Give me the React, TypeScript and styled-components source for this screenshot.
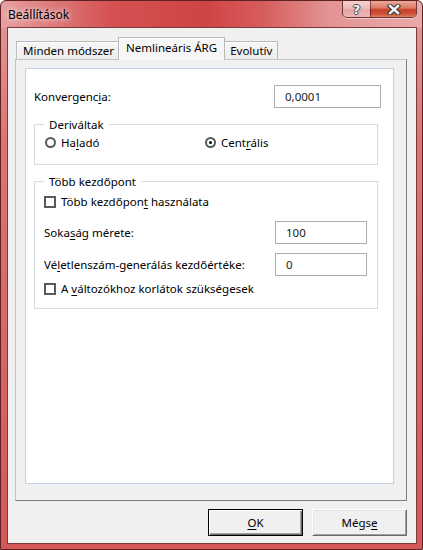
// react
import React from 'react'

// packages
import styled, { createGlobalStyle, css } from 'styled-components'

// constants
const FONT = `"Noto Sans", "Open Sans", sans-serif`
const FONT_SIZE = '11.5px'
const TEXT = '#000'

// global
const GlobalStyle = createGlobalStyle`
  html, body {
    margin: 0;
    padding: 0;
  }
  body {
    background: #fff;
    color: ${TEXT};
    font-family: ${FONT};
    font-size: ${FONT_SIZE};
  }
  * {
    box-sizing: border-box;
  }
`

// window frame
const Frame = styled.div`
  background:
    linear-gradient(90deg, #e8a0a0 0%, #df8080 10%, #d45252 26%, #cf4444 48%, #d65c5c 62%, #e39494 78%, #eaa9a9 100%) 0 0 / 100% 27px no-repeat,
    linear-gradient(180deg, #e49a9a 0, #dc7474 140px, #d45858 100%);
  border: 1px solid #5e2222;
  border-radius: 6px 6px 0 0;
  display: flex;
  flex-direction: column;
  height: 550px;
  padding: 0 5px 5px 6px;
  width: 423px;
`

const TitleBar = styled.div`
  align-items: flex-start;
  display: flex;
  height: 26px;
  justify-content: space-between;
`

const Title = styled.span`
  font-size: 12px;
  line-height: 15px;
  margin: 6px 0 0 1px;
  text-shadow: 0 0 5px rgba(255, 255, 255, 0.9), 0 0 10px rgba(255, 255, 255, 0.6);
`

const CaptionGroup = styled.div`
  border: 1px solid rgba(70, 20, 20, 0.75);
  border-radius: 0 0 5px 5px;
  border-top: none;
  box-shadow: 0 1px 0 rgba(255, 255, 255, 0.45);
  display: flex;
  height: 17px;
  overflow: hidden;
`

const CaptionButton = styled.div<{ $close?: boolean }>`
  align-items: center;
  display: flex;
  justify-content: center;
  width: ${({ $close }) => ($close ? 46 : 27)}px;

  ${({ $close }) =>
    $close
      ? css`
          background: linear-gradient(180deg, #eba89a 0%, #dd7c68 42%, #c7412a 55%, #d0533a 82%, #e2825f 100%);
          border-left: 1px solid rgba(70, 20, 20, 0.6);
        `
      : css`
          background: linear-gradient(180deg, rgba(255, 255, 255, 0.55) 0%, rgba(255, 255, 255, 0.32) 45%, rgba(255, 255, 255, 0.12) 55%, rgba(255, 255, 255, 0.28) 100%);
        `}
`

const HelpGlyph = styled.span`
  color: #f4f4f4;
  font-family: "DejaVu Sans", sans-serif;
  font-size: 13px;
  font-weight: bold;
  line-height: 15px;
  text-shadow: 1px 0 #4a4a4a, -1px 0 #4a4a4a, 0 1px #4a4a4a, 0 -1px #4a4a4a;
`

// client area
const Client = styled.div`
  background: #f0f0f0;
  border: 1px solid #7b3a3a;
  display: flex;
  flex: 1;
  flex-direction: column;
  padding: 9px 9px 7px 7px;
`

const TabStrip = styled.div`
  align-items: flex-end;
  display: flex;
  margin-bottom: -1px;
  padding-left: 1px;
  position: relative;
  z-index: 1;
`

const Tab = styled.div<{ $active?: boolean }>`
  align-items: center;
  border: 1px solid #b9b9b9;
  border-bottom: none;
  box-shadow: inset 1px 1px 0 #fff;
  display: flex;
  font-size: ${FONT_SIZE};
  white-space: nowrap;

  ${({ $active }) =>
    $active
      ? css`
          background: #f6f6f6;
          height: 23px;
          margin: 0 -2px;
          padding: 0 7px 3px;
          position: relative;
          z-index: 1;
        `
      : css`
          background: linear-gradient(180deg, #f6f6f6, #ededed);
          height: 18px;
          margin-bottom: 1px;
          padding: 0 5px 0 6px;
        `}
`

const Panel = styled.div`
  background: #f0f0f0;
  border: 1px solid;
  border-color: #c4c4c4 #7c7c7c #7c7c7c #c4c4c4;
  display: flex;
  flex: 1;
  flex-direction: column;
  padding: 8px 12px 16px 9px;
`

const Sheet = styled.div`
  background: #fff;
  border: 1px solid #c3d3e1;
  flex: 1;
  padding: 16px 12px 0 8px;
`

const FieldRow = styled.div<{ $gap?: number }>`
  align-items: center;
  display: flex;
  justify-content: space-between;
  margin-top: ${({ $gap }) => $gap ?? 0}px;
`

const Label = styled.span`
  line-height: 15px;
  white-space: nowrap;
`

const TextBox = styled.input<{ $w: number }>`
  background: #fff;
  border: 1px solid #abadb3;
  color: #1a1a1a;
  font-family: ${FONT};
  font-size: ${FONT_SIZE};
  height: 23px;
  margin: 0;
  outline: none;
  padding: 0 0 0 10px;
  width: ${({ $w }) => $w}px;
`

const Group = styled.fieldset<{ $pb: number }>`
  border: 1px solid #d3dce3;
  margin: 9px 3px 0 0;
  min-width: 0;
  padding: 0 10px ${({ $pb }) => $pb}px 9px;
`

const Legend = styled.legend`
  font-size: ${FONT_SIZE};
  line-height: 15px;
  padding: 0 5px;
`

const RadioRow = styled.div`
  display: grid;
  grid-template-columns: 160px 1fr;
  margin-top: 3px;
  padding-left: 1px;
`

const Option = styled.label<{ $gap?: number }>`
  align-items: center;
  display: flex;
  gap: 5px;
  line-height: 15px;
  margin-top: ${({ $gap }) => $gap ?? 0}px;
  white-space: nowrap;
`

const Radio = styled.span<{ $on?: boolean }>`
  align-items: center;
  background: #fff;
  border: 2px solid #585858;
  border-radius: 50%;
  display: flex;
  flex-shrink: 0;
  height: 11px;
  justify-content: center;
  width: 11px;

  &::after {
    background: ${({ $on }) => ($on ? '#000' : 'transparent')};
    border-radius: 50%;
    content: '';
    height: 3px;
    width: 3px;
  }
`

const Check = styled.span`
  background: #fff;
  border: 2px solid #5a5a5a;
  flex-shrink: 0;
  height: 12px;
  width: 12px;
`

const Key = styled.u`
  text-decoration: underline;
  text-underline-offset: 2px;
`

// footer
const Footer = styled.div`
  display: flex;
  gap: 9px;
  justify-content: flex-end;
  margin-top: 8px;
`

const Button = styled.button<{ $default?: boolean }>`
  background: #f0f0f0;
  border: 1px solid;
  color: ${TEXT};
  font-family: ${FONT};
  font-size: ${FONT_SIZE};
  height: 27px;
  padding: 0;
  width: 95px;

  ${({ $default }) =>
    $default
      ? css`
          border-color: #000;
          box-shadow: inset 1px 1px 0 #fff, inset -1px -1px 0 #696969, inset -2px -2px 0 #a0a0a0;
        `
      : css`
          border-color: #fff #696969 #696969 #fff;
          box-shadow: inset 1px 1px 0 #e3e3e3, inset -1px -1px 0 #a0a0a0;
        `}
`

const CloseIcon = () => (
  <svg width='14' height='11' viewBox='0 0 14 11'>
    <path d='M3 2 L11 9 M11 2 L3 9' stroke='#3d3d3d' strokeWidth='4.6' strokeLinecap='square' />
    <path d='M3 2 L11 9 M11 2 L3 9' stroke='#f6f6f6' strokeWidth='2.4' strokeLinecap='square' />
  </svg>
)

export default function App() {
  return (
    <>
      <GlobalStyle />
      <Frame>
        <TitleBar>
          <Title>Beállítások</Title>
          <CaptionGroup>
            <CaptionButton>
              <HelpGlyph>?</HelpGlyph>
            </CaptionButton>
            <CaptionButton $close>
              <CloseIcon />
            </CaptionButton>
          </CaptionGroup>
        </TitleBar>

        <Client>
          <TabStrip role='tablist'>
            <Tab role='tab'>Minden módszer</Tab>
            <Tab role='tab' $active aria-selected>
              Nemlineáris ÁRG
            </Tab>
            <Tab role='tab'>Evolutív</Tab>
          </TabStrip>

          <Panel>
            <Sheet>
              <FieldRow>
                <Label>
                  Konvergenc<Key>i</Key>a:
                </Label>
                <TextBox $w={107} readOnly defaultValue='0,0001' />
              </FieldRow>

              <Group $pb={14}>
                <Legend>Deriváltak</Legend>
                <RadioRow>
                  <Option>
                    <Radio />
                    <span>
                      Ha<Key>l</Key>adó
                    </span>
                  </Option>
                  <Option>
                    <Radio $on />
                    <span>
                      Cent<Key>r</Key>ális
                    </span>
                  </Option>
                </RadioRow>
              </Group>

              <Group $pb={12}>
                <Legend>Több kezdőpont</Legend>
                <Option $gap={5}>
                  <Check />
                  <span>
                    Több kezdőpon<Key>t</Key> használata
                  </span>
                </Option>
                <FieldRow $gap={12}>
                  <Label>
                    Soka<Key>s</Key>ág mérete:
                  </Label>
                  <TextBox $w={92} readOnly defaultValue='100' />
                </FieldRow>
                <FieldRow $gap={9}>
                  <Label>
                    Vé<Key>l</Key>etlenszám-generálás kezdőértéke:
                  </Label>
                  <TextBox $w={92} readOnly defaultValue='0' />
                </FieldRow>
                <Option $gap={5}>
                  <Check />
                  <span>
                    A <Key>v</Key>áltozókhoz korlátok szükségesek
                  </span>
                </Option>
              </Group>
            </Sheet>
          </Panel>

          <Footer>
            <Button $default>
              <Key>O</Key>K
            </Button>
            <Button>
              Mégs<Key>e</Key>
            </Button>
          </Footer>
        </Client>
      </Frame>
    </>
  )
}
